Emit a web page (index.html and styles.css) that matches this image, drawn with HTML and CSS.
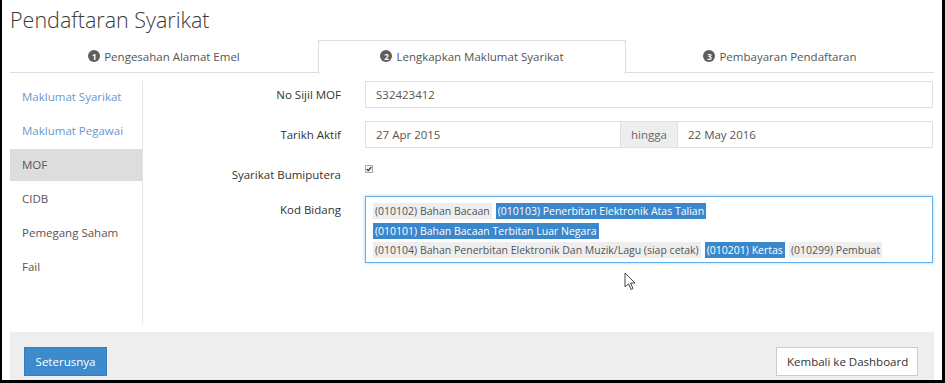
FILE: index.html
```html
<!DOCTYPE html>
<html lang="ms">
<head>
<meta charset="utf-8">
<title>Pendaftaran Syarikat</title>
<link rel="stylesheet" href="styles.css">
</head>
<body>
<div class="frame">
  <h1 class="title">Pendaftaran Syarikat</h1>
  <ul class="tabs">
    <li class="tab"><span class="num">1</span>Pengesahan Alamat Emel</li>
    <li class="tab active"><span class="num">2</span>Lengkapkan Maklumat Syarikat</li>
    <li class="tab"><span class="num">3</span>Pembayaran Pendaftaran</li>
  </ul>
  <div class="main">
    <ul class="side">
      <li class="side-item link">Maklumat Syarikat</li>
      <li class="side-item link">Maklumat Pegawai</li>
      <li class="side-item current">MOF</li>
      <li class="side-item">CIDB</li>
      <li class="side-item">Pemegang Saham</li>
      <li class="side-item">Fail</li>
    </ul>
    <div class="form">
      <div class="row">
        <label class="lbl">No Sijil MOF</label>
        <div class="input">S32423412</div>
      </div>
      <div class="row">
        <label class="lbl">Tarikh Aktif</label>
        <div class="group">
          <div class="input grow">27 Apr 2015</div>
          <div class="addon">hingga</div>
          <div class="input grow">22 May 2016</div>
        </div>
      </div>
      <div class="row">
        <label class="lbl">Syarikat Bumiputera</label>
        <div class="checkwrap"><span class="check"><svg viewBox="0 0 8 8" width="6" height="6"><path d="M1 4.2 L3 6.2 L7 1.5" fill="none" stroke="#222" stroke-width="1.6"/></svg></span></div>
      </div>
      <div class="row">
        <label class="lbl">Kod Bidang</label>
        <div class="tagbox">
          <div class="tagrow">
            <span class="tag">(010102) Bahan Bacaan</span>
            <span class="tag sel">(010103) Penerbitan Elektronik Atas Talian</span>
          </div>
          <div class="tagrow">
            <span class="tag sel">(010101) Bahan Bacaan Terbitan Luar Negara</span>
          </div>
          <div class="tagrow">
            <span class="tag">(010104) Bahan Penerbitan Elektronik Dan Muzik/Lagu (siap cetak)</span>
            <span class="tag sel">(010201) Kertas</span>
            <span class="tag">(010299) Pembuat</span>
          </div>
        </div>
      </div>
    </div>
  </div>
  <div class="footer">
    <button class="btn primary">Seterusnya</button>
    <button class="btn plain">Kembali ke Dashboard</button>
  </div>
  <svg class="cursor" viewBox="0 0 12 19" width="12" height="19"><path d="M1 1 L1 15 L4.5 11.8 L7 17.5 L9 16.6 L6.6 11 L11 11 Z" fill="#fff" stroke="#444" stroke-width="1" stroke-linejoin="round"/></svg>
</div>
</body>
</html>
```
FILE: styles.css
```css
* { box-sizing: border-box; }
html, body { margin: 0; padding: 0; background: #fff; }
body { font-family: "Open Sans", "Liberation Sans", sans-serif; font-size: 11.5px; color: #333; }
.frame {
  position: relative;
  width: 945px;
  height: 383px;
  overflow: hidden;
  border-left: 2px solid #000;
  border-right: 3px solid #000;
  border-bottom: 3px solid #000;
  padding: 0 8px 0 8px;
}
.title {
  margin: 0;
  padding-top: 5px;
  height: 40px;
  font-size: 21.5px;
  font-weight: 300;
  line-height: 30px;
  color: #3a3a3a;
}
.tabs {
  list-style: none;
  margin: 0;
  padding: 0;
  display: flex;
  height: 33px;
  border-bottom: 1px solid #ddd;
}
.tab {
  flex: 1;
  display: flex;
  align-items: center;
  justify-content: center;
  color: #555;
  height: 33px;
  padding-bottom: 2px;
  border: 1px solid transparent;
  border-bottom: none;
}
.tab.active {
  background: #fff;
  border-color: #ddd;
  margin-bottom: -1px;
  height: 34px;
  padding-bottom: 3px;
}
.num {
  display: inline-flex;
  align-items: center;
  justify-content: center;
  width: 12px;
  height: 12px;
  border-radius: 50%;
  background: #5e5e5e;
  color: #fff;
  font-size: 8px;
  font-weight: 700;
  margin-right: 4px;
}
.main {
  display: flex;
  padding: 8px 0 8px 0;
}
.side {
  list-style: none;
  margin: 0;
  padding: 0;
  width: 133px;
  height: 243px;
  border-right: 1px solid #e5e5e5;
}
.side-item {
  height: 32px;
  margin-bottom: 2px;
  line-height: 32px;
  padding-left: 12px;
  color: #555;
}
.side-item.link { color: #6a98cf; }
.side-item.current { background: #ddd; }
.form {
  flex: 1;
  padding-right: 1px;
}
.row {
  display: grid;
  grid-template-columns: 198px 1fr;
  column-gap: 24px;
  margin-bottom: 13px;
}
.lbl {
  text-align: right;
  padding-top: 5px;
  line-height: 17px;
  color: #333;
}
.input {
  height: 27px;
  border: 1px solid #e0e0e0;
  padding: 0 10px;
  line-height: 25px;
  color: #555;
  background: #fff;
}
.group { display: flex; }
.grow { flex: 1; }
.group .input:first-child { border-right: none; }
.group .input:last-child { border-left: none; }
.addon {
  width: 58px;
  height: 27px;
  line-height: 25px;
  text-align: center;
  background: #eee;
  border: 1px solid #e0e0e0;
  color: #666;
}
.checkwrap { padding-top: 4px; height: 22px; }
.check {
  display: flex;
  align-items: center;
  justify-content: center;
  width: 8px;
  height: 8px;
  border: 1px solid #aaa;
  background: #f4f4f4;
}
.tagbox {
  border: 1px solid #66afe9;
  box-shadow: 0 0 3px rgba(102,175,233,.6);
  padding: 6px 7px 4px 7px;
  display: flex;
  flex-direction: column;
  gap: 3.5px;
}
.tagrow { display: flex; gap: 4px; }
.tag {
  background: #eee;
  color: #555;
  font-size: 10.5px;
  line-height: 16px;
  padding: 0 2px;
  white-space: nowrap;
}
.tag.sel { background: #3a87cc; color: #fff; }
.footer {
  display: flex;
  justify-content: space-between;
  align-items: flex-start;
  background: #eee;
  height: 60px;
  padding: 15px 16px 0 14px;
}
.btn {
  font-family: "Open Sans", "Liberation Sans", sans-serif;
  font-size: 11.5px;
  height: 29px;
  padding: 0 10px;
  border-radius: 0;
  white-space: nowrap;
  cursor: pointer;
}
.btn.primary { background: #3d8bcd; color: #fff; border: 1px solid #357ebd; width: 83px; }
.btn.plain { background: #fff; color: #333; border: 1px solid #ccc; width: 142px; }
.cursor { position: absolute; left: 622px; top: 272px; }
```
